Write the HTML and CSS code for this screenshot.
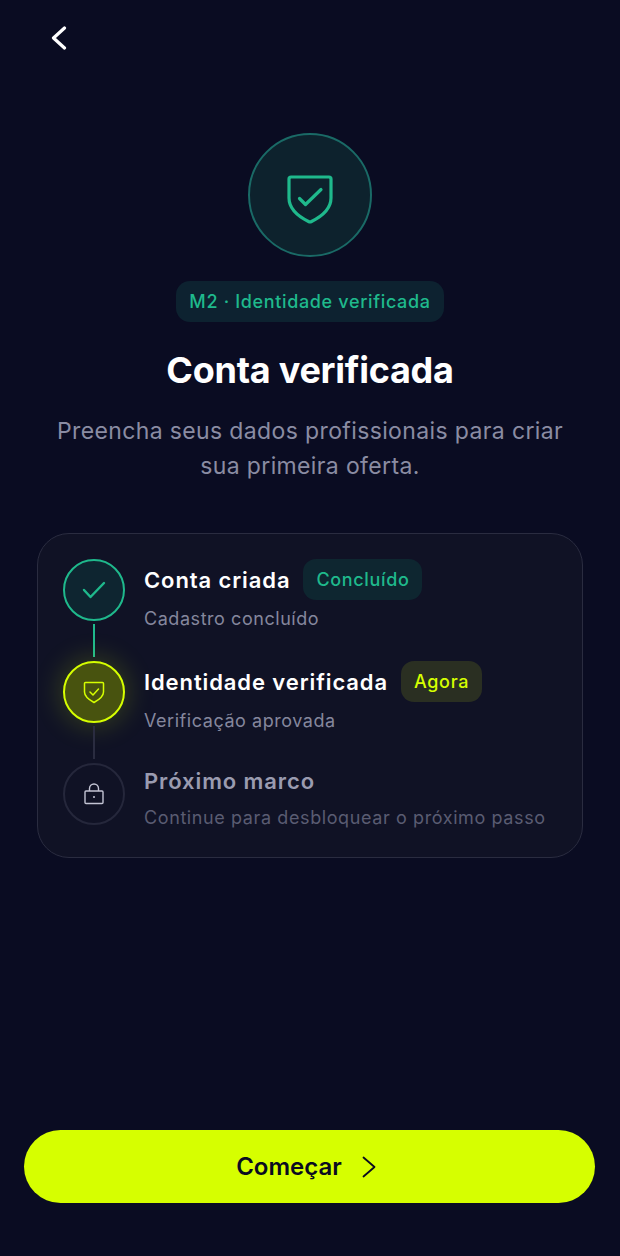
FILE: index.html
```html
<!DOCTYPE html>
<html lang="pt-BR">
<head>
<meta charset="utf-8">
<title>Conta verificada</title>
<link rel="stylesheet" href="styles.css">
</head>
<body>
<main class="screen">
  <header class="topbar">
    <svg class="back" width="16" height="24" viewBox="0 0 16 24" fill="none"><path d="M13.5 2 2.5 12l11 10" stroke="#fff" stroke-width="3.2" stroke-linecap="round" stroke-linejoin="round"/></svg>
  </header>
  <section class="hero">
    <div class="hero-circle">
      <svg class="hero-icon" width="48" height="50" viewBox="0 0 48 50" fill="none"><path d="M5 3h38a2 2 0 0 1 2 2v19c0 10.500-8.500 18-19.500 23.500a3.500 3.500 0 0 1-3 0C11.500 42 3 34.500 3 24V5a2 2 0 0 1 2-2z" stroke="#1fb98c" stroke-width="3.200" stroke-linejoin="round"/><path d="M13.500 24.500 19.500 30.500 35 15.500" stroke="#1fb98c" stroke-width="3.200" stroke-linecap="round" stroke-linejoin="round"/></svg>
    </div>
    <div class="pill">M2 · Identidade verificada</div>
    <h1 class="title">Conta verificada</h1>
    <p class="subtitle">Preencha seus dados profissionais para criar<br>sua primeira oferta.</p>
  </section>
  <section class="card">
    <div class="step">
      <div class="rail">
        <div class="dot dot-done">
          <svg width="26" height="20" viewBox="0 0 26 20" fill="none"><path d="M3 10 9.500 17 23 3" stroke="#1fb98c" stroke-width="2.400" stroke-linecap="round" stroke-linejoin="round"/></svg>
        </div>
        <div class="line line-done"></div>
      </div>
      <div class="body">
        <div class="head"><span class="name">Conta criada</span><span class="tag tag-done">Concluído</span></div>
        <div class="desc">Cadastro concluído</div>
      </div>
    </div>
    <div class="step">
      <div class="rail">
        <div class="dot dot-now">
          <svg width="22" height="23" viewBox="0 0 22 23" fill="none"><path d="M2.500 1.500h17a1 1 0 0 1 1 1v8.500c0 4.500-4 7.500-9.500 10.500C5.500 18.500 1.500 15.500 1.500 11V2.500a1 1 0 0 1 1-1z" stroke="#d6ff00" stroke-width="1.500" stroke-linejoin="round"/><path d="M7 11 10 14 15.500 8" stroke="#d6ff00" stroke-width="1.500" stroke-linecap="round" stroke-linejoin="round"/></svg>
        </div>
        <div class="line"></div>
      </div>
      <div class="body">
        <div class="head"><span class="name">Identidade verificada</span><span class="tag tag-now">Agora</span></div>
        <div class="desc">Verificação aprovada</div>
      </div>
    </div>
    <div class="step step-last">
      <div class="rail">
        <div class="dot dot-next">
          <svg width="20" height="22" viewBox="0 0 20 22" fill="none"><rect x="1" y="8" width="18" height="12.500" rx="1" stroke="#c3c4d4" stroke-width="1.400"/><path d="M5.500 8V5.500a4.500 4.500 0 0 1 9 0V8" stroke="#c3c4d4" stroke-width="1.400"/><circle cx="10" cy="14" r="1" fill="#c3c4d4"/></svg>
        </div>
      </div>
      <div class="body">
        <div class="head head-next"><span class="name name-next">Próximo marco</span></div>
        <div class="desc desc-next">Continue para desbloquear o próximo passo</div>
      </div>
    </div>
  </section>
  <div class="spacer"></div>
  <button class="cta" type="button">
    <span>Começar</span>
    <svg width="14" height="22" viewBox="0 0 14 22" fill="none"><path d="M1.500 1.500 12.500 11 1.500 20.500" stroke="#0a0b20" stroke-width="1.800" stroke-linecap="round" stroke-linejoin="round"/></svg>
  </button>
</main>
</body>
</html>
```
FILE: styles.css
```css
* { box-sizing: border-box; }
html, body { margin: 0; padding: 0; }
body {
  width: 620px;
  height: 1256px;
  overflow: hidden;
  background: #0a0c22;
  font-family: Inter, "Liberation Sans", sans-serif;
  color: #fff;
}
.screen {
  height: 1256px;
  display: flex;
  flex-direction: column;
  padding: 0 24px 53px;
}
.topbar {
  height: 133px;
  padding: 26px 0 0 27px;
}
.back { display: block; }
.hero {
  display: flex;
  flex-direction: column;
  align-items: center;
}
.hero-circle {
  width: 124px;
  height: 124px;
  border-radius: 50%;
  background: #0d222d;
  border: 2px solid #1a6a66;
  display: flex;
  align-items: center;
  justify-content: center;
}
.hero-icon { margin-top: 7px; }
.pill {
  margin-top: 24px;
  height: 41px;
  width: 268px;
  border-radius: 14px;
  background: #0d2230;
  color: #1fb98c;
  font-size: 18px;
  font-weight: 550;
  letter-spacing: 0.65px;
  display: flex;
  align-items: center;
  justify-content: center;
}
.title {
  margin: 24px 0 0;
  font-size: 36px;
  line-height: 48px;
  font-weight: 700;
  letter-spacing: -0.25px;
  text-align: center;
}
.subtitle {
  margin: 20px 0 0;
  font-size: 23px;
  line-height: 35px;
  letter-spacing: 0.37px;
  font-weight: 400;
  color: #8a8ca3;
  text-align: center;
}
.card {
  margin: 49px 13px 0;
  height: 325px;
  padding: 25px 25px 0;
  border-radius: 32px;
  border: 1.500px solid #2a2c40;
  background: #101225;
  display: flex;
  flex-direction: column;
}
.step {
  display: flex;
  height: 102px;
  gap: 19px;
}
.step-last { height: auto; }
.rail {
  width: 62px;
  display: flex;
  flex-direction: column;
  align-items: center;
  flex: none;
}
.dot {
  width: 62px;
  height: 62px;
  border-radius: 50%;
  display: flex;
  align-items: center;
  justify-content: center;
  flex: none;
}
.dot-done { background: #0e2530; border: 2.500px solid #1fb98c; }
.dot-now {
  background: #48530f;
  border: 2.500px solid #d6ff00;
  box-shadow: 0 0 30px rgba(214, 255, 0, 0.24);
}
.dot-next { background: #101225; border: 2px solid #25273b; }
.line {
  width: 2px;
  height: 33px;
  margin-top: 3px;
  background: #2a2c40;
}
.line-done { background: #1fb98c; }
.body { min-width: 0; }
.head {
  display: flex;
  align-items: center;
  height: 41px;
  gap: 13px;
}
.head-next { height: 36px; }
.name {
  font-size: 22px;
  font-weight: 600;
  letter-spacing: 0.9px;
  white-space: nowrap;
}
.name-next { color: #9a9bb0; }
.tag {
  height: 41px;
  padding: 0 13px;
  border-radius: 13px;
  font-size: 18px;
  font-weight: 550;
  letter-spacing: 0.65px;
  display: flex;
  align-items: center;
}
.tag-done { background: #0e2630; color: #1fb98c; }
.tag-now { background: #2a2f22; color: #d6ff00; }
.desc {
  margin-top: 7px;
  font-size: 18px;
  line-height: 24px;
  letter-spacing: 0.55px;
  color: #85879d;
  white-space: nowrap;
}
.desc-next { color: #5a5c72; letter-spacing: 0.6px; }
.spacer { flex: 1; }
.cta {
  height: 73px;
  width: 571px;
  align-self: flex-start;
  border: 0;
  border-radius: 37px;
  background: #d6ff00;
  color: #0a0b20;
  font-family: inherit;
  font-size: 24px;
  font-weight: 600;
  display: flex;
  align-items: center;
  justify-content: center;
  gap: 20px;
  padding: 0 7px 0 0;
}
```
